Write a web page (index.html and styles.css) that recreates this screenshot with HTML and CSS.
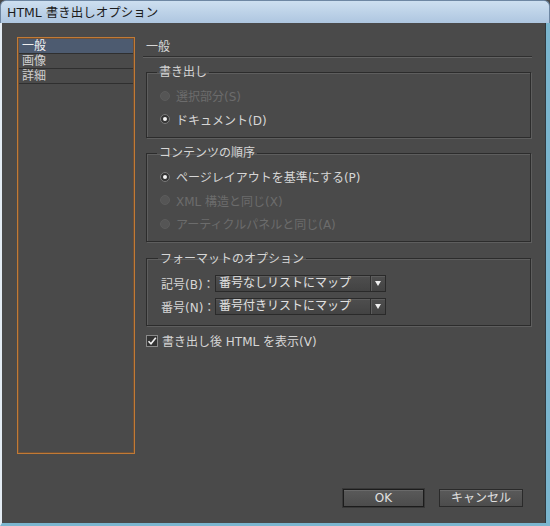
FILE: index.html
```html
<!DOCTYPE html>
<html lang="ja">
<head>
<meta charset="utf-8">
<title>HTML 書き出しオプション</title>
<link rel="stylesheet" href="styles.css">
</head>
<body>
<div class="window">
  <div class="titlebar">HTML 書き出しオプション</div>
  <div class="client">
    <div class="content">
      <ul class="sidebar">
        <li class="item selected">一般</li>
        <li class="item">画像</li>
        <li class="item">詳細</li>
      </ul>
      <div class="main">
        <div class="header">一般</div>
        <fieldset class="group g1">
          <legend>書き出し</legend>
          <div class="radio-row disabled"><span class="radio"></span>選択部分(S)</div>
          <div class="radio-row"><span class="radio on"></span>ドキュメント(D)</div>
        </fieldset>
        <fieldset class="group g2">
          <legend>コンテンツの順序</legend>
          <div class="radio-row"><span class="radio on"></span>ページレイアウトを基準にする(P)</div>
          <div class="radio-row disabled"><span class="radio"></span>XML 構造と同じ(X)</div>
          <div class="radio-row disabled"><span class="radio"></span>アーティクルパネルと同じ(A)</div>
        </fieldset>
        <fieldset class="group g3">
          <legend>フォーマットのオプション</legend>
          <div class="select-row"><span class="label">記号(B)：</span><span class="select"><span class="value">番号なしリストにマップ</span><span class="arrow"></span></span></div>
          <div class="select-row"><span class="label">番号(N)：</span><span class="select"><span class="value">番号付きリストにマップ</span><span class="arrow"></span></span></div>
        </fieldset>
        <div class="check-row"><span class="checkbox"><svg width="10" height="10" viewBox="0 0 10 10"><path d="M1.5 5.2 L4 7.8 L8.8 1.8" fill="none" stroke="#f0f0f0" stroke-width="1.6"/></svg></span>書き出し後 HTML を表示(V)</div>
      </div>
    </div>
    <div class="footer">
      <button class="btn default">OK</button>
      <button class="btn">キャンセル</button>
    </div>
  </div>
</div>
</body>
</html>
```
FILE: styles.css
```css
* { box-sizing: border-box; }
html, body { margin: 0; padding: 0; }
body {
  width: 550px; height: 526px; overflow: hidden;
  background: #4a4a4a;
  font-family: "DejaVu Sans", "Noto Sans CJK JP", sans-serif;
  font-size: 12px;
  color: #d6d6d6;
}
.window { width: 550px; height: 526px; display: flex; flex-direction: column; }
.titlebar {
  height: 23px; line-height: 23px; padding-left: 6px;
  background: linear-gradient(#cddff0, #aec6e0);
  color: #1c1c1c; font-size: 12.5px;
  border-top: 1px solid #6e87a3;
  border-left: 1px solid #6e87a3;
  border-right: 1px solid #6e87a3;
  border-radius: 6px 6px 0 0;
}
.client {
  flex: 1;
  display: flex; flex-direction: column;
  background: #4a4a4a;
  border-left: 2px solid #e4ecf4;
  border-right: 4px solid #7bb6cf;
  border-bottom: 3px solid #7bb6cf;
  box-shadow: inset -1px 0 0 #2f3a40;
  padding: 14px 12px 16px 15px;
}
.content { display: flex; }
.sidebar {
  list-style: none; margin: 0; padding: 1px;
  flex: 0 0 118px; height: 417px;
  border: 1px solid #c27a35;
  box-shadow: inset 0 0 0 1px #6e5036;
  background: #4a4a4a;
}
.item {
  height: 15px; line-height: 14px; padding-left: 3px;
  font-size: 12px; color: #d0d0d0;
  border-bottom: 1px solid #2f2f2f;
  overflow: hidden;
}
.item.selected { background: #4d5b70; color: #f0f0f0; }
.main { flex: 0 0 389px; margin-left: 8px; padding-top: 3px; }
.header {
  line-height: 14px; padding-left: 3px; padding-bottom: 2px;
  border-bottom: 1px solid #2f2f2f;
  box-shadow: 0 1px 0 #626262;
  color: #d6d6d6;
}
.group {
  margin: 0 1px 0 3px;
  border: 1px solid #2c2c2c;
  box-shadow: 1px 1px 0 #5e5e5e, inset 1px 1px 0 #5e5e5e;
  padding: 0 0 0 13px;
  min-width: 0;
}
.group legend {
  padding: 0 2px; margin-left: -3px;
  line-height: 14px; color: #d6d6d6;
}
.g1 { margin-top: 8px; padding-top: 5px; padding-bottom: 6px; }
.g2 { margin-top: 8px; padding-top: 5px; padding-bottom: 5px; }
.g3 { margin-top: 10px; padding-top: 6px; padding-bottom: 7px; padding-left: 14px; }
.radio-row { display: flex; align-items: center; height: 23.5px; }
.radio-row.disabled { color: #6c6c6c; }
.radio {
  width: 10px; height: 10px; border-radius: 50%;
  margin-right: 6px;
  background: #353535;
  border: 1px solid #7a7a7a;
  display: flex; align-items: center; justify-content: center;
}
.radio.on::after { content: ""; width: 4px; height: 4px; border-radius: 50%; background: #f4f4f4; }
.radio-row.disabled .radio { background: #555; border-color: #5c5c5c; }
.select-row { display: flex; align-items: center; height: 23px; }
.label { width: 54px; white-space: nowrap; }
.select {
  display: flex; width: 171px; height: 17px;
  border: 1px solid #2a2a2a;
  background: linear-gradient(#4e4e4e, #434343);
  box-shadow: inset 0 1px 0 #5c5c5c;
}
.value { flex: 1; line-height: 15px; padding-left: 3px; color: #e2e2e2; white-space: nowrap; overflow: hidden; }
.arrow {
  width: 15px; border-left: 1px solid #2e2e2e;
  box-shadow: inset 1px 0 0 #5e5e5e;
  display: flex; align-items: center; justify-content: center;
}
.arrow::after {
  content: ""; width: 0; height: 0;
  border-left: 3.5px solid transparent; border-right: 3.5px solid transparent;
  border-top: 5px solid #eeeeee;
}
.check-row { display: flex; align-items: center; height: 22px; margin-top: 4px; margin-left: 3px; }
.checkbox {
  width: 12px; height: 12px; margin-right: 4px;
  background: #333; border: 1px solid #8a8a8a;
  display: flex; align-items: center; justify-content: center;
}
.footer { margin-top: auto; display: flex; justify-content: flex-end; gap: 15px; padding-right: 11px; }
.btn {
  width: 81px; height: 18px; padding: 0;
  font-family: "DejaVu Sans", "Noto Sans CJK JP", sans-serif;
  font-size: 12px; line-height: 16px; color: #e0e0e0;
  background: linear-gradient(#5a5a5a, #4c4c4c);
  border: 1px solid #2a2a2a;
  box-shadow: inset 0 1px 0 #6a6a6a;
}
.btn + .btn { width: 84px; }
.btn.default { border: 1px solid #1c1c1c; box-shadow: 0 0 0 1px #383838, inset 0 1px 0 #6a6a6a; }
```
